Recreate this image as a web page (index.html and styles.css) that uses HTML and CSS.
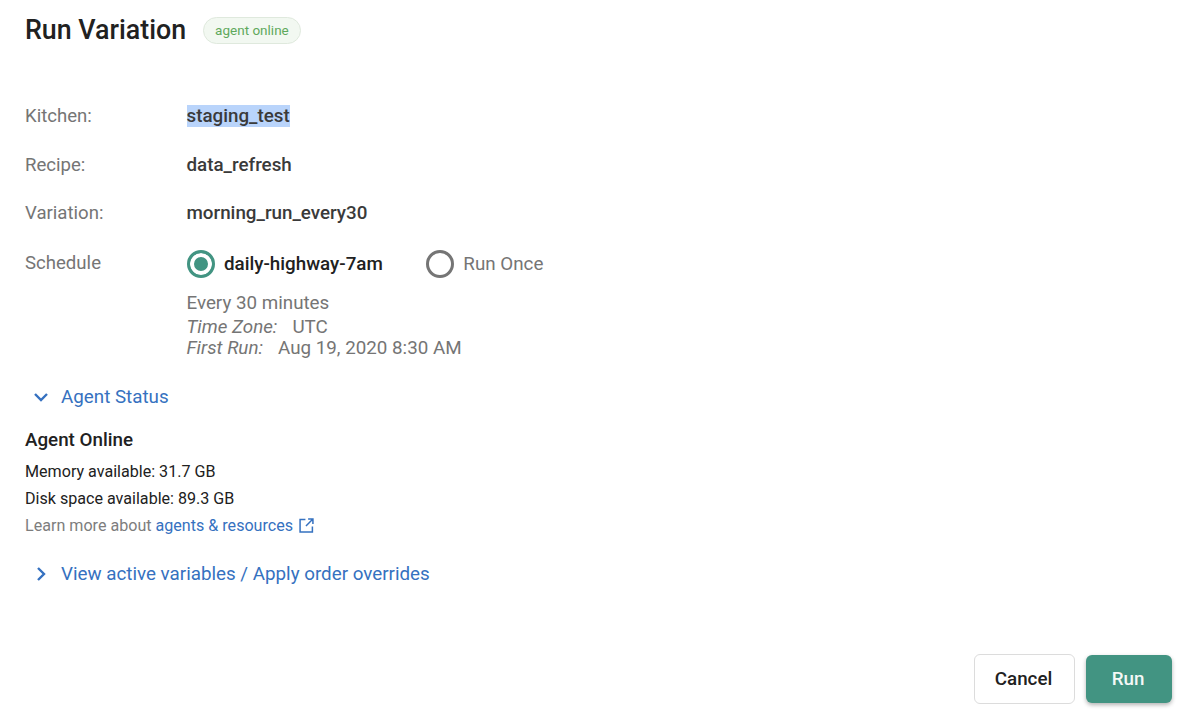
FILE: index.html
```html
<!DOCTYPE html>
<html lang="en">
<head>
    <meta charset="UTF-8">
    <title>Run Variation</title>
    <link rel="stylesheet" href="styles.css">
</head>
<body>
    <div class="dialog">
        <div class="header">
            <h1 class="title">Run Variation</h1>
            <span class="chip">agent online</span>
        </div>

        <div class="details">
            <div class="row">
                <div class="label">Kitchen:</div>
                <div class="value"><span class="selected">staging_test</span></div>
            </div>
            <div class="row">
                <div class="label">Recipe:</div>
                <div class="value">data_refresh</div>
            </div>
            <div class="row">
                <div class="label">Variation:</div>
                <div class="value">morning_run_every30</div>
            </div>
        </div>

        <div class="schedule">
            <div class="label">Schedule</div>
            <div class="schedule-body">
                <div class="radios">
                    <div class="radio radio-on">
                        <span class="radio-mark"></span>
                        <span>daily-highway-7am</span>
                    </div>
                    <div class="radio">
                        <span class="radio-mark"></span>
                        <span>Run Once</span>
                    </div>
                </div>
                <div class="schedule-every">Every 30 minutes</div>
                <div class="schedule-line"><em>Time Zone:</em><span>UTC</span></div>
                <div class="schedule-line"><em>First Run:</em><span>Aug 19, 2020 8:30 AM</span></div>
            </div>
        </div>

        <div class="toggle toggle-status">
            <svg class="toggle-icon" viewBox="0 0 16 16" width="16" height="16"><path d="M2 5l6 6 6-6" /></svg>
            <span>Agent Status</span>
        </div>

        <div class="agent">
            <h2 class="agent-title">Agent Online</h2>
            <div class="agent-line">Memory available: 31.7 GB</div>
            <div class="agent-line">Disk space available: 89.3 GB</div>
            <div class="agent-line agent-more">
                Learn more about <a href="#">agents &amp; resources</a>
                <svg class="ext-icon" viewBox="0 0 14 14" width="15" height="15"><path d="M6 1.5H1v11.500h11.500V8M8.500 1H13v4.500M13 1L6.500 7.500" /></svg>
            </div>
        </div>

        <div class="toggle toggle-vars">
            <svg class="toggle-icon" viewBox="0 0 16 16" width="16" height="16"><path d="M5 2l6 6-6 6" /></svg>
            <span>View active variables / Apply order overrides</span>
        </div>

        <div class="footer">
            <button class="btn btn-cancel">Cancel</button>
            <button class="btn btn-run">Run</button>
        </div>
    </div>
</body>
</html>
```

FILE: styles.css
```css
* {
    box-sizing: border-box;
}
body {
    margin: 0;
    font-family: Roboto, Arial, sans-serif;
    background: #fff;
    color: #333;
}
.dialog {
    height: 723px;
    padding: 12px 28px 19px 25px;
    display: flex;
    flex-direction: column;
}
.header {
    display: flex;
    align-items: center;
    gap: 17px;
    height: 36px;
}
.title {
    margin: 0;
    font-size: 26.8px;
    font-weight: 500;
    color: #212121;
}
.chip {
    height: 27px;
    line-height: 25px;
    padding: 0 11px;
    font-size: 13.5px;
    color: #5fa95c;
    background: #f2f8f1;
    border: 1px solid #dfe9dd;
    border-radius: 14px;
}
.details {
    margin-top: 44px;
}
.row {
    display: flex;
    height: 48.5px;
    line-height: 48px;
}
.label {
    width: 161.5px;
    font-size: 18.6px;
    color: #757575;
}
.value {
    font-size: 18.8px;
    font-weight: 500;
    color: #3a3a3a;
}
.selected {
    background: #b9d4fb;
    padding: 0;
}
.schedule {
    display: flex;
    margin-top: 8px;
}
.schedule .label {
    line-height: 28px;
    padding-top: 3px;
}
.schedule-body {
    font-size: 18.8px;
    color: #757575;
}
.radios {
    display: flex;
    gap: 43px;
    height: 32px;
    margin-top: 2px;
}
.radio {
    display: flex;
    align-items: center;
    gap: 9px;
}
.radio-on {
    font-weight: 500;
    color: #212121;
}
.radio-mark {
    width: 28px;
    height: 28px;
    margin-left: 0.5px;
    border: 3px solid #757575;
    border-radius: 50%;
    background: #fff;
}
.radio-on .radio-mark {
    border-color: #429482;
    background: #429482;
    box-shadow: inset 0 0 0 4px #fff;
}
.schedule-every {
    margin-top: 11px;
    line-height: 24px;
}
.schedule-line {
    display: flex;
    gap: 14px;
    line-height: 22px;
}
.schedule-line em {
    margin-right: 1px;
}
.schedule-every + .schedule-line {
    margin-top: 1px;
    margin-bottom: -1px;
}
.toggle {
    display: flex;
    align-items: center;
    color: #3571c0;
    font-size: 18.8px;
    line-height: 24px;
}
.toggle-icon {
    fill: none;
    stroke: #3571c0;
    stroke-width: 2.4;
    margin-left: 8px;
    margin-right: 12px;
}
.toggle-status {
    margin-top: 26px;
}
.agent {
    margin-top: 19px;
}
.agent-title {
    margin: 0 0 6px;
    font-size: 18.8px;
    font-weight: 500;
    line-height: 24px;
    color: #212121;
}
.agent-line {
    font-size: 16.1px;
    line-height: 27px;
    color: #212121;
}
.agent-more {
    color: #7d7d7d;
}
.agent-more a {
    color: #3571c0;
    text-decoration: none;
}
.ext-icon {
    fill: none;
    stroke: #3571c0;
    stroke-width: 1.4;
    margin-left: 2px;
    vertical-align: -2px;
}
.toggle-vars {
    margin-top: 23px;
}
.footer {
    margin-top: auto;
    display: flex;
    justify-content: flex-end;
    gap: 11px;
    align-items: center;
}
.btn {
    height: 50px;
    padding: 0 2px 0 0;
    font-family: inherit;
    font-size: 18.8px;
    font-weight: 500;
    border-radius: 6px;
}
.btn-cancel {
    width: 101px;
    background: #fff;
    color: #212121;
    border: 1px solid #dcdcdc;
}
.btn-run {
    width: 86px;
    height: 48px;
    background: #429482;
    color: #f4f8f7;
    border: none;
    box-shadow: 0 2px 4px rgba(0, 0, 0, 0.3);
}
```
